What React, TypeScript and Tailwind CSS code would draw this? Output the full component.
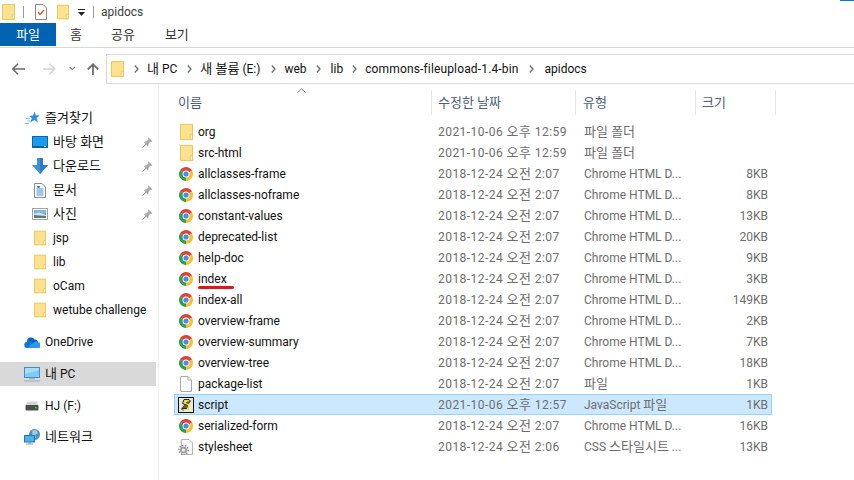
import React from "react";

const fontStack = { fontFamily: 'Roboto, "Noto Sans CJK KR", sans-serif' };

const T = ({ s }: { s: string }) => (
  <>
    {s.split(/([\uAC00-\uD7A3]+(?: [\uAC00-\uD7A3]+)*)/).map((p, i) =>
      i % 2 === 1 ? (
        <span key={i} className="text-[13px] leading-none">{p}</span>
      ) : (
        <span key={i}>{p}</span>
      )
    )}
  </>
);

const Folder = ({ w = 13, h = 16 }: { w?: number; h?: number }) => (
  <svg width={w} height={h} viewBox="0 0 14 17" className="shrink-0">
    <path d="M0.5 0.5H13.5V16.5H0.5Z" fill="#fde38f" stroke="#e8c04f" />
    <path d="M11 11.5H13.5V16.5H11Z" fill="#fff3c4" stroke="#e8c04f" strokeWidth="0.8" />
  </svg>
);

const Chrome = () => (
  <svg width="14" height="14" viewBox="0 0 14 14" className="shrink-0">
    <path d="M7 7L0.94 3.5A7 7 0 0 1 13.06 3.5Z" fill="#dc4437" />
    <path d="M7 7L13.06 3.5A7 7 0 0 1 7 14Z" fill="#fbc02d" />
    <path d="M7 7L7 14A7 7 0 0 1 0.94 3.5Z" fill="#2e9e4f" />
    <circle cx="7" cy="7" r="3.5" fill="#fff" />
    <circle cx="7" cy="7" r="2.6" fill="#4a8af4" />
  </svg>
);

const BlankDoc = () => (
  <svg width="12" height="16" viewBox="0 0 12 16" className="shrink-0">
    <path d="M0.5 0.5H8L11.5 4V15.5H0.5Z" fill="#fff" stroke="#a9a9a9" />
    <path d="M8 0.5V4H11.5" fill="#eee" stroke="#a9a9a9" />
  </svg>
);

const ScriptIcon = () => (
  <svg width="16" height="16" viewBox="0 0 16 16" className="shrink-0">
    <rect x="0.5" y="0.5" width="15" height="15" fill="#e8e8e0" stroke="#111" />
    <path d="M4 13L12 3" stroke="#555" strokeWidth="3" />
    <path d="M11 3.5H6.5L5.5 6.5L10.5 8L9.5 12H4.5" fill="none" stroke="#f0e020" strokeWidth="2" />
    <path d="M11 2.5H6L4.5 6.5L9.5 8.5L8.5 11.5H4" fill="none" stroke="#111" strokeWidth="0.9" />
  </svg>
);

const CssIcon = () => (
  <svg width="16" height="16" viewBox="0 0 16 16" className="shrink-0">
    <path d="M3.5 0.5H11L14.5 4V15.5H3.5Z" fill="#fbfbfb" stroke="#b5b5b5" />
    <circle cx="5.5" cy="11" r="3.6" fill="#a4a4a4" />
    <circle cx="5.5" cy="11" r="4.6" fill="none" stroke="#8a8a8a" strokeWidth="1.4" strokeDasharray="1.4 1.4" />
    <circle cx="5.5" cy="11" r="1.6" fill="#f0f0f0" />
  </svg>
);

const Pin = () => (
  <svg width="11" height="11" viewBox="0 0 11 11" className="shrink-0">
    <path d="M6.5 0.5L10.5 4.5L9.5 5L8.5 4.5L6.5 6.5L6.5 8.5L5.5 9L2 5.5L2.5 4.5L4.5 4.5L6.5 2.5L6 1.5Z" fill="#a3a9ae" />
    <path d="M3.5 7L0.5 10.5L4 7.5Z" fill="#7f858a" stroke="#8b9196" strokeWidth="0.6" />
  </svg>
);

const Star = () => (
  <svg width="16" height="14" viewBox="0 0 16 14" className="shrink-0">
    <path d="M10.6 0.5L11.8 4.3L15.8 4.4L12.6 6.9L13.8 11.5L10.2 8.9L6.4 11.5L7.8 7.2L5.4 5L9 4.4Z" fill="#2c8fe0" />
    <path d="M2 7.5H5.5M3 10H6.5M0.5 12.5H5" stroke="#8fc4ee" strokeWidth="1" />
  </svg>
);

const Desktop = () => (
  <svg width="16" height="12" viewBox="0 0 16 12" className="shrink-0">
    <rect x="0.5" y="0.5" width="15" height="11" fill="#1a9cee" stroke="#0a67ad" />
    <rect x="1" y="10" width="14" height="1" fill="#0d5d9c" />
    <rect x="12" y="10" width="2" height="1" fill="#e6f3fc" />
  </svg>
);

const DownArrow = () => (
  <svg width="16" height="16" viewBox="0 0 16 16" className="shrink-0">
    <path d="M5 0H11V7H16L8 16L0 7H5Z" fill="#3e8fdc" />
    <path d="M8 16L16 7H11V0H8Z" fill="#2f7cc6" />
  </svg>
);

const DocIcon = () => (
  <svg width="12" height="15" viewBox="0 0 12 15" className="shrink-0">
    <path d="M0.5 0.5H8L11.5 4V14.5H0.5Z" fill="#fff" stroke="#8d8d8d" />
    <path d="M3 3.5H6M2.5 6H9.5M2.5 8H9.5M2.5 10H9.5M2.5 12H9.5" stroke="#3f8fce" />
    <path d="M5 3L3 5H6Z" fill="#2c7fbf" />
  </svg>
);

const PhotoIcon = () => (
  <svg width="16" height="12" viewBox="0 0 16 12" className="shrink-0">
    <rect x="0.5" y="0.5" width="15" height="11" fill="#fff" stroke="#a2a2a2" />
    <rect x="2" y="2" width="12" height="4" fill="#7fb6e4" />
    <rect x="2" y="6" width="12" height="4" fill="#5a7f6a" />
    <path d="M2 6L7 4.5L14 7V8L2 7Z" fill="#d7e6ee" />
  </svg>
);

const Cloud = () => (
  <svg width="16" height="11" viewBox="0 0 16 11" className="shrink-0">
    <path d="M3 4.5A4 4 0 0 1 10.5 2.5A3 3 0 0 1 14 5L7 8Z" fill="#0a64c5" />
    <path d="M3.5 11A3 3 0 0 1 3 5A3 3 0 0 1 7 4.5L11 7L7 11Z" fill="#0f78d4" />
    <path d="M3.5 11H14A2 2 0 0 0 14 5.2A3 3 0 0 0 10 5.5L6.5 8Z" fill="#2a9be8" />
  </svg>
);

const Monitor = () => (
  <svg width="16" height="15" viewBox="0 0 16 15" className="shrink-0">
    <rect x="0.5" y="0.5" width="15" height="10" fill="#7fcbf7" stroke="#3d8fc4" />
    <path d="M1 1H15V3L1 7Z" fill="#a9def9" />
    <rect x="5" y="11" width="6" height="1.5" fill="#b0b8bf" />
    <rect x="0" y="13.5" width="16" height="1" fill="#98aebf" />
  </svg>
);

const Drive = () => (
  <svg width="14" height="10" viewBox="0 0 14 10" className="shrink-0">
    <path d="M2 0.5H12L13.5 5H0.5Z" fill="#d4d4d4" />
    <rect x="0.5" y="4" width="13" height="5.5" rx="1" fill="#4d4d4d" />
    <rect x="10" y="6" width="1.6" height="1.4" fill="#4fe04f" />
  </svg>
);

const NetworkIcon = () => (
  <svg width="16" height="16" viewBox="0 0 16 16" className="shrink-0">
    <circle cx="10.5" cy="5.5" r="5.5" fill="#4f94c6" />
    <path d="M8 2L12 1L14 4L11 6L12 9L9 8Z" fill="#a7cbe2" />
    <rect x="0.5" y="6.5" width="10" height="6.5" fill="#4ab1ec" stroke="#2c74a5" />
    <rect x="4" y="13" width="3" height="1.5" fill="#8da2b1" />
    <rect x="2" y="14.5" width="7" height="1" fill="#8da2b1" />
  </svg>
);

const Crumb = () => (
  <svg width="5" height="8" viewBox="0 0 5 8" className="shrink-0">
    <path d="M0.8 0.5L4 4L0.8 7.5" fill="none" stroke="#6b6b6b" strokeWidth="1.3" />
  </svg>
);

const Item = ({ icon, label, pin, active, sub, cls = "" }: { icon: React.ReactNode; label: string; pin?: boolean; active?: boolean; sub?: boolean; cls?: string }) => (
  <div className={`h-6 flex items-center w-[156px] ${active ? "bg-[#d9d9d9]" : ""} ${sub ? "pl-[32px]" : "pl-[24px]"} ${cls}`}>
    <span className="flex justify-center shrink-0 w-[16px] mr-[5px]">{icon}</span>
    <span className="text-[12px] text-[#111] whitespace-nowrap"><T s={label} /></span>
    {pin && <span className="ml-auto mr-[3px]"><Pin /></span>}
  </div>
);

type Row = { icon: React.ReactNode; name: string; date: string; type: string; size: string };
const chromeRow = (name: string, date: string, size: string): Row => ({ icon: <Chrome />, name, date, type: "Chrome HTML D...", size });
const D18 = "2018-12-24 오전 2:07";
const rows: Row[] = [
  { icon: <Folder />, name: "org", date: "2021-10-06 오후 12:59", type: "파일 폴더", size: "" },
  { icon: <Folder />, name: "src-html", date: "2021-10-06 오후 12:59", type: "파일 폴더", size: "" },
  chromeRow("allclasses-frame", D18, "8KB"),
  chromeRow("allclasses-noframe", D18, "8KB"),
  chromeRow("constant-values", D18, "13KB"),
  chromeRow("deprecated-list", D18, "20KB"),
  chromeRow("help-doc", D18, "9KB"),
  chromeRow("index", D18, "3KB"),
  chromeRow("index-all", D18, "149KB"),
  chromeRow("overview-frame", D18, "2KB"),
  chromeRow("overview-summary", D18, "7KB"),
  chromeRow("overview-tree", D18, "18KB"),
  { icon: <BlankDoc />, name: "package-list", date: D18, type: "파일", size: "1KB" },
  { icon: <ScriptIcon />, name: "script", date: "2021-10-06 오후 12:57", type: "JavaScript 파일", size: "1KB" },
  chromeRow("serialized-form", D18, "16KB"),
  { icon: <CssIcon />, name: "stylesheet", date: "2018-12-24 오전 2:06", type: "CSS 스타일시트 ...", size: "13KB" },
];

export default function App() {
  return (
    <div className="w-[854px] h-[480px] overflow-hidden bg-white flex flex-col" style={fontStack}>
      {/* Title bar */}
      <div className="h-[23px] flex items-center pl-[2px] relative shrink-0">
        <Folder w={13} h={16} />
        <div className="w-px h-[12px] bg-[#9a9a9a] ml-[8px]" />
        <svg width="12" height="16" viewBox="0 0 12 16" className="ml-[11px] shrink-0">
          <path d="M0.5 0.5H8L11.5 4V15.5H0.5Z" fill="#fff" stroke="#8a8a8a" />
          <path d="M3 8L5 10.5L9 6" fill="none" stroke="#e0592a" strokeWidth="1.4" />
        </svg>
        <div className="ml-[10px]"><Folder w={12} h={16} /></div>
        <svg width="7" height="8" viewBox="0 0 7 8" className="ml-[9px] mt-[3px] shrink-0">
          <path d="M0 0H7V1H0ZM0 3H7L3.5 7Z" fill="#222" />
        </svg>
        <div className="w-px h-[12px] bg-[#9a9a9a] ml-[8px]" />
        <span className="ml-[7px] text-[12px] text-[#3c3c3c]">apidocs</span>
        <div className="absolute right-0 top-0 w-[14px] h-px bg-[#0078d7]" />
      </div>
      {/* Ribbon tabs */}
      <div className="h-[23px] flex items-center shrink-0 text-[12px] text-[#333]">
        <div className="w-[56px] h-full bg-[#0063b1] text-white flex items-center justify-center"><T s="파일" /></div>
        <span className="ml-[14px]"><T s="홈" /></span>
        <span className="ml-[29px]"><T s="공유" /></span>
        <span className="ml-[30px]"><T s="보기" /></span>
      </div>
      {/* Toolbar */}
      <div className="h-[37px] border-t border-[#d9d9d9] flex items-center shrink-0 mt-[1px] pt-[5px]">
        <svg width="100" height="16" viewBox="0 0 100 16" className="ml-[6px] shrink-0">
          <path d="M7.5 8H19M12 2.8L6.8 8L12 13.2" fill="none" stroke="#6e6e6e" strokeWidth="1.6" />
          <path d="M37 8H48.5M43.5 2.8L48.7 8L43.5 13.2" fill="none" stroke="#d4d4d4" strokeWidth="1.6" />
          <path d="M63.5 6L66.3 8.5L69 6" fill="none" stroke="#8c8c8c" strokeWidth="1.2" />
          <path d="M87 14V3.5M81.8 8.5L87 3.2L92.2 8.5" fill="none" stroke="#6e6e6e" strokeWidth="1.8" />
        </svg>
        <div className="flex-1 h-[30px] border border-l border-r-0 border-[#d9d9d9] flex items-center text-[12px] text-[#111] pl-[4px] whitespace-nowrap">
          <Folder w={13} h={16} />
          <span className="ml-[10px]"><Crumb /></span>
          <span className="ml-[8px]"><T s="내 PC" /></span>
          <span className="ml-[10px]"><Crumb /></span>
          <span className="ml-[8px]"><T s="새 볼륨 (E:)" /></span>
          <span className="ml-[11px]"><Crumb /></span>
          <span className="ml-[8px]">web</span>
          <span className="ml-[9px]"><Crumb /></span>
          <span className="ml-[10px]">lib</span>
          <span className="ml-[9px]"><Crumb /></span>
          <span className="ml-[8px] tracking-[0.15px]">commons-fileupload-1.4-bin</span>
          <span className="ml-[10px]"><Crumb /></span>
          <span className="ml-[11px]">apidocs</span>
        </div>
      </div>
      {/* Body */}
      <div className="flex-1 flex min-h-0">
        <div className="w-[159px] border-r border-[#f0f0f0] pt-[22px] shrink-0">
          <Item icon={<Star />} label="즐겨찾기" />
          <Item sub icon={<Desktop />} label="바탕 화면" pin />
          <Item sub icon={<DownArrow />} label="다운로드" pin />
          <Item sub icon={<DocIcon />} label="문서" pin />
          <Item sub icon={<PhotoIcon />} label="사진" pin />
          <Item sub icon={<Folder w={12} h={16} />} label="jsp" />
          <Item sub icon={<Folder w={12} h={16} />} label="lib" />
          <Item sub icon={<Folder w={12} h={16} />} label="oCam" />
          <Item sub icon={<Folder w={12} h={16} />} label="wetube challenge" />
          <Item cls="mt-2" icon={<Cloud />} label="OneDrive" />
          <Item cls="mt-2" active icon={<Monitor />} label="내 PC" />
          <Item cls="mt-2" icon={<Drive />} label="HJ (F:)" />
          <Item cls="mt-[7px]" icon={<NetworkIcon />} label="네트워크" />
        </div>
        <div className="flex-1 min-w-0 pl-[15px]">
          {/* Column header */}
          <div className="relative grid grid-cols-[258px_144px_120px_80px] h-[31px] pt-[6px] text-[12px] text-[#4c607a] w-[602px] mb-[6px]">
            <div className="h-[25px] border-r border-[#e5e5e5] flex items-center pl-[4px]"><T s="이름" /></div>
            <div className="h-[25px] border-r border-[#e5e5e5] flex items-center pl-[6px]"><T s="수정한 날짜" /></div>
            <div className="h-[25px] border-r border-[#e5e5e5] flex items-center pl-[7px]"><T s="유형" /></div>
            <div className="h-[25px] border-r border-[#e5e5e5] flex items-center pl-[6px]"><T s="크기" /></div>
            <svg width="9" height="5" viewBox="0 0 9 5" className="absolute left-[123px] top-[4px]">
              <path d="M0.5 4.5L4.5 0.8L8.5 4.5" fill="none" stroke="#7d7d7d" />
            </svg>
          </div>
          {/* Rows */}
          {rows.map((r) => {
            const sel = r.name === "script";
            return (
              <div key={r.name} className={`relative grid grid-cols-[257px_144px_120px_77px] items-center h-[21px] w-[598px] text-[12px] ${sel ? "bg-[#cce8ff] outline outline-1 -outline-offset-1 outline-[#99d1ff]" : ""}`}>
                <div className="flex items-center pl-[4px] whitespace-nowrap text-[#111]">
                  <span className="w-[16px] flex justify-center shrink-0">{r.icon}</span>
                  <span className="ml-[4px]">{r.name}</span>
                </div>
                <div className="pl-[7px] text-[#6d6d6d] whitespace-nowrap tracking-[0.45px]"><T s={r.date} /></div>
                <div className="pl-[9px] text-[#6d6d6d] whitespace-nowrap"><T s={r.type} /></div>
                <div className="text-right pr-[4px] text-[#6d6d6d]">{r.size}</div>
                {r.name === "index" && (
                  <div className="absolute left-[24px] top-[18px] w-[36px] h-[3px] rounded-full bg-[#e0141c]" />
                )}
              </div>
            );
          })}
        </div>
      </div>
    </div>
  );
}
